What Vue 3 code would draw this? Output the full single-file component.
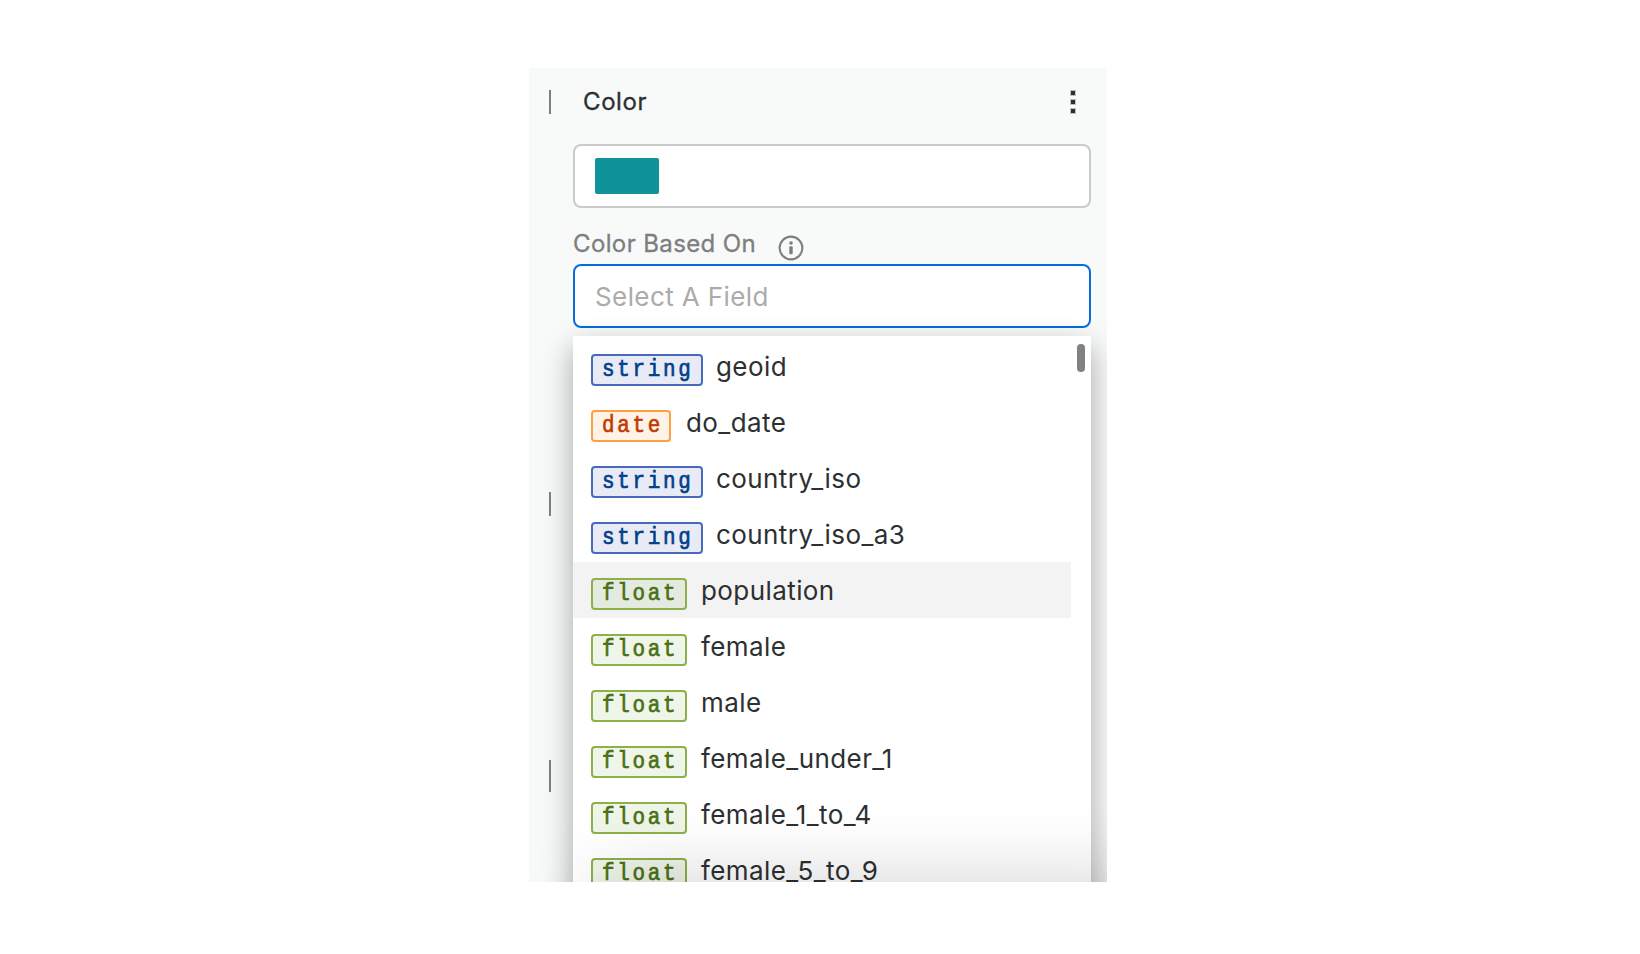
<script setup>
const fields = [
  { type: 'string', name: 'geoid' },
  { type: 'date', name: 'do_date' },
  { type: 'string', name: 'country_iso' },
  { type: 'string', name: 'country_iso_a3' },
  { type: 'float', name: 'population', hover: true },
  { type: 'float', name: 'female' },
  { type: 'float', name: 'male' },
  { type: 'float', name: 'female_under_1' },
  { type: 'float', name: 'female_1_to_4' },
  { type: 'float', name: 'female_5_to_9' },
]
</script>

<template>
  <main class="page">
    <section class="panel">
      <aside class="rail">
        <i class="tick"></i>
        <i class="tick second"></i>
        <i class="tick third"></i>
      </aside>
      <div class="content">
        <header class="head">
          <span class="title">Color</span>
          <svg class="more" width="6" height="24" viewBox="0 0 6 24">
            <g fill="#bfc1c1">
              <rect width="6" height="6" /><rect y="9" width="6" height="6" /><rect y="18" width="6" height="6" />
            </g>
            <g fill="#2c3032">
              <rect x="1" y="1" width="4" height="4" /><rect x="1" y="10" width="4" height="4" /><rect x="1" y="19" width="4" height="4" />
            </g>
          </svg>
        </header>
        <div class="field"><span class="swatch"></span></div>
        <div class="label">
          <span class="caption">Color Based On</span>
          <svg class="info" width="26" height="26" viewBox="0 0 26 26">
            <circle cx="13" cy="13" r="11.4" fill="none" stroke="#7d7f7f" stroke-width="2.1" />
            <circle cx="13" cy="8" r="1.8" fill="#7d7f7f" />
            <rect x="11.3" y="11.2" width="3.4" height="8" rx="1" fill="#7d7f7f" />
          </svg>
        </div>
        <div class="field active"><span class="placeholder">Select A Field</span></div>
        <div class="dropdown">
          <ul class="list">
            <li v-for="f in fields" :key="f.name" class="row" :class="{ hover: f.hover }">
              <span class="tag" :class="f.type"><span class="tagtext">{{ f.type }}</span></span>
              <span class="name">{{ f.name }}</span>
            </li>
          </ul>
          <i class="thumb"></i>
        </div>
      </div>
      <div class="shade"></div>
    </section>
  </main>
</template>

<style>
body { background: #fff; }
</style>

<style scoped>
.page {
  height: 954px;
  padding-top: 68px;
  box-sizing: border-box;
  font-family: Inter, "Liberation Sans", sans-serif;
  color: #2c3032;
}
.panel {
  position: relative;
  width: 578px;
  height: 814px;
  margin-left: 529px;
  overflow: hidden;
  background: #f8faf9;
  display: flex;
}
.rail { width: 44px; flex: none; padding: 22px 0 0 20px; box-sizing: border-box; }
.tick { display: block; width: 2px; height: 24px; background: #7d7f7f; position: relative; z-index: 2; }
.second { margin-top: 378px; }
.third { margin-top: 244px; height: 32px; }
.content { width: 518px; flex: none; }
.head {
  height: 76px;
  padding: 22px 15px 0 10px;
  box-sizing: border-box;
  display: flex;
  justify-content: space-between;
}
.title { font-size: 24px; line-height: 24px; letter-spacing: 0.6px; -webkit-text-stroke: 0.35px; }
.field {
  height: 64px;
  box-sizing: border-box;
  border: 2px solid #c9cbca;
  border-radius: 8px;
  background: #fff;
  padding-left: 20px;
  display: flex;
  align-items: center;
}
.active { border-color: #056de0; }
.swatch { width: 64px; height: 36px; border-radius: 2px; background: #0f9299; }
.label {
  height: 56px;
  box-sizing: border-box;
  padding-top: 21px;
  display: flex;
  font-size: 24px;
  line-height: 30px;
  letter-spacing: 0.38px;
  -webkit-text-stroke: 0.35px;
  color: #7d7f7f;
}
.caption { width: 205px; white-space: nowrap; }
.info { margin-top: 6px; }
.placeholder { font-size: 26px; letter-spacing: 0.4px; color: #ababab; }
.dropdown {
  position: relative;
  height: 640px;
  margin-top: 8px;
  padding-top: 2px;
  background: #fff;
  box-shadow: 0 12px 28px rgba(0, 0, 0, 0.34);
}
.list { list-style: none; margin: 0; padding: 0; width: 498px; }
.row { height: 56px; display: flex; padding-left: 18px; box-sizing: border-box; }
.hover { background: #f3f3f3; }
.tag {
  height: 32px;
  margin-top: 16px;
  box-sizing: border-box;
  border: 2px solid;
  border-radius: 4px;
  padding-left: 9px;
  font-family: "Liberation Mono", monospace;
  font-size: 24px;
  line-height: 28px;
  letter-spacing: 3.1px;
  -webkit-text-stroke: 0.7px;
}
.tagtext { display: inline-block; height: 28px; transform: scaleX(0.87); transform-origin: 0 50%; }
.string { width: 112px; color: #00408b; background: #e8eaf6; border-color: #476bba; }
.date { width: 80px; color: #c13b00; background: #fff3e8; border-color: #ff9f40; margin-right: 1px; }
.float { width: 96px; color: #487013; background: #eff5e9; border-color: #8cb14b; }
.hover .float { background: #e4eae0; }
.name { margin-left: 14px; padding-top: 8px; font-size: 26px; line-height: 41px; letter-spacing: 0.42px; height: 41px; white-space: nowrap; }
.string + .name { margin-left: 13px; }
.thumb { position: absolute; right: 6px; top: 8px; width: 8px; height: 28px; border-radius: 4px; background: #808182; }
.shade {
  position: absolute;
  z-index: 3;
  left: 70px;
  right: -60px;
  top: 100%;
  height: 100px;
  box-shadow: 0 0 80px rgba(0, 0, 0, 0.18);
}
</style>
